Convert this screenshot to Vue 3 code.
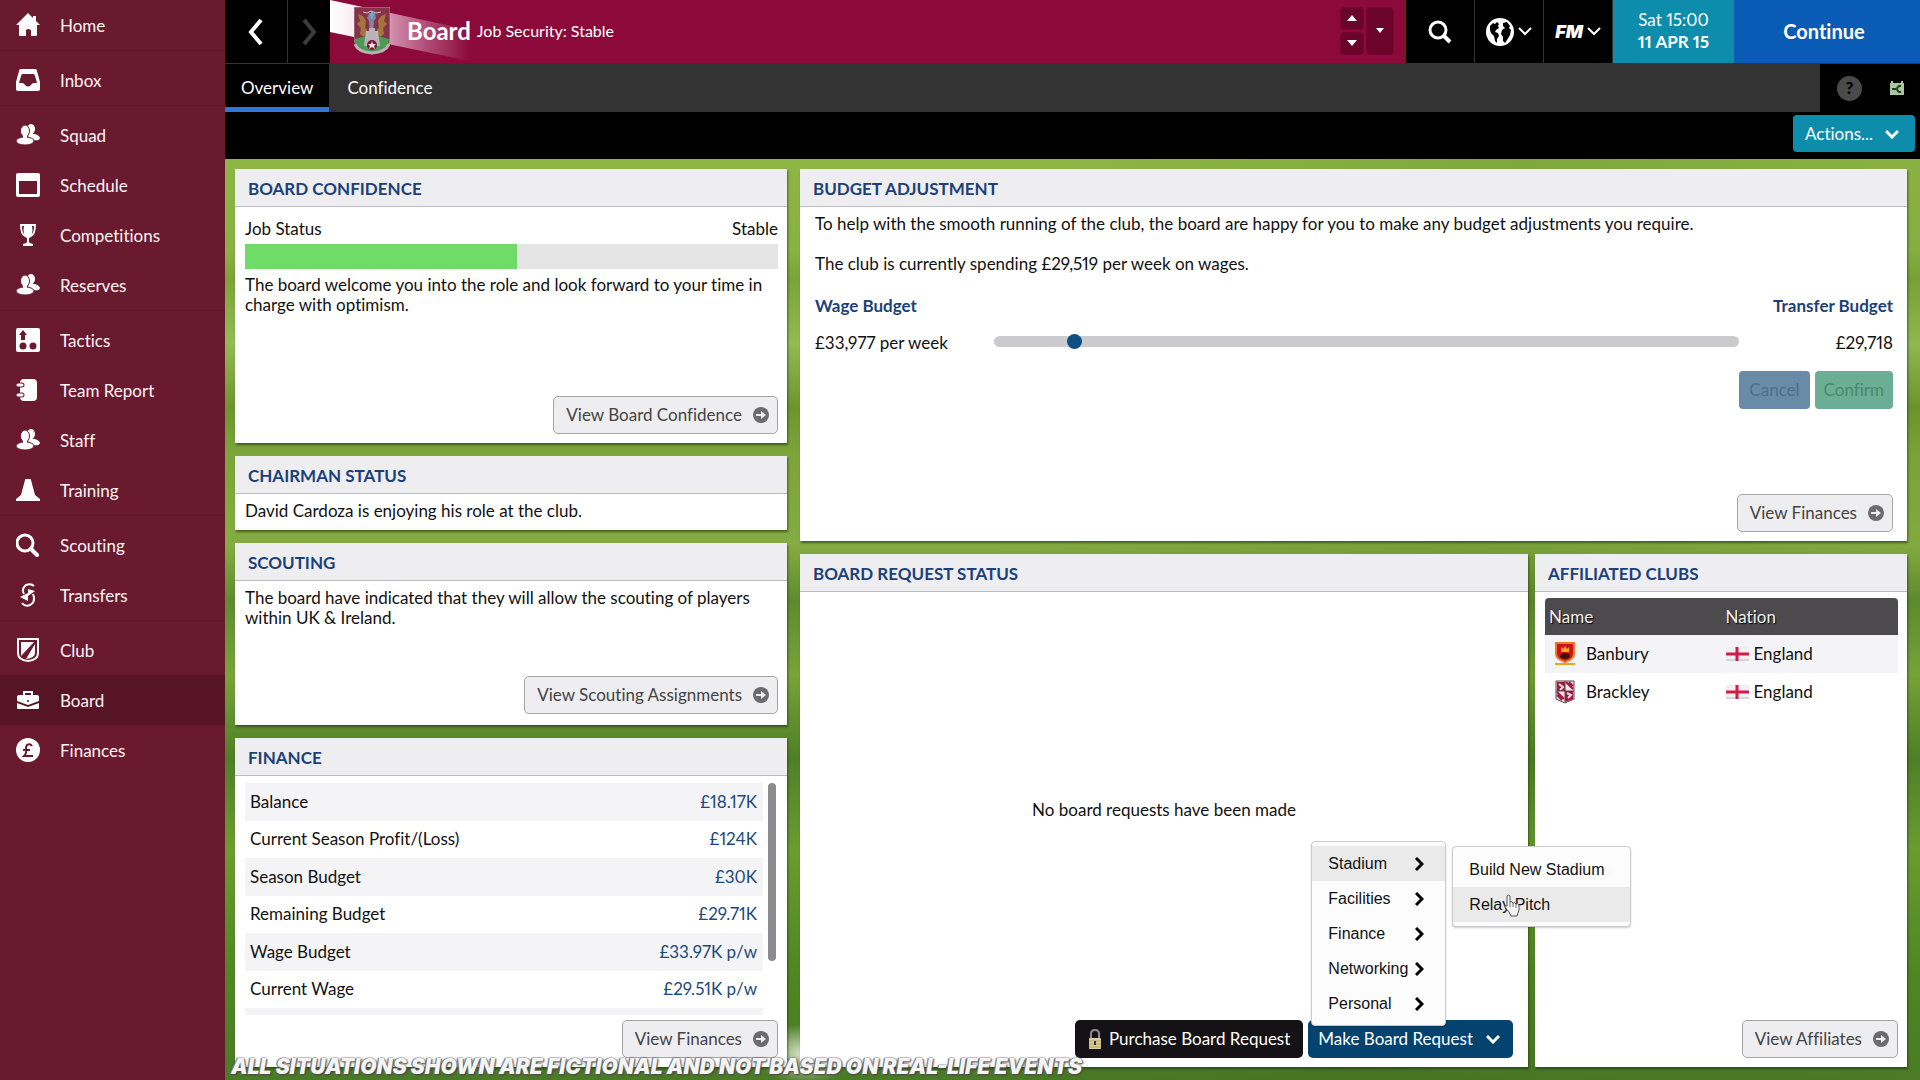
<template>
  <div class="app">
    <!-- sidebar -->
    <nav class="sidebar">
      <ul v-for="(group, index) in menuGroups" :key="index" class="nav-group">
        <li v-for="item in group" :key="item.name">
          <a
            href="#"
            :class="{ active: activeMenu === item.name }"
            @click.prevent="activeMenu = item.name"
          >
            <svg class="nav-icon" viewBox="0 0 24 24" v-html="icons[item.icon]"></svg>
            <span>{{ item.name }}</span>
          </a>
        </li>
      </ul>
    </nav>

    <div class="main">
      <!-- top bar -->
      <header class="topbar">
        <button class="back" aria-label="Back">
          <svg width="18" height="28" viewBox="0 0 18 28"><path d="M14 2 4 14l10 12" fill="none" stroke="#fff" stroke-width="4" /></svg>
        </button>
        <button class="forward" aria-label="Forward">
          <svg width="18" height="28" viewBox="0 0 18 28"><path d="M4 2l10 12L4 26" fill="none" stroke="#3c3c3c" stroke-width="4" /></svg>
        </button>
        <div class="title">
          <svg class="stripe" width="140" height="63" viewBox="0 0 140 63">
            <defs>
              <linearGradient id="stripeFade" x1="0" x2="1" y1="0" y2="0">
                <stop offset="0" stop-color="#fff" />
                <stop offset="0.3" stop-color="#f3dfe7" />
                <stop offset="0.45" stop-color="#d08aaa" />
                <stop offset="0.7" stop-color="#ae4a74" />
                <stop offset="1" stop-color="#8b0a39" />
              </linearGradient>
            </defs>
            <path d="M0 0 140 30V61L0 32z" fill="url(#stripeFade)" />
          </svg>
          <svg class="crest" width="36" height="48" viewBox="0 0 36 48">
            <path d="M0 0h36v32q0 9-18 15Q0 41 0 32z" fill="#84334a" stroke="#a58e93" />
            <path d="M1 32q8-3 17-3t17 3q0 9-17 14Q1 41 1 32z" fill="#4d9a55" />
            <path d="M4 7l5 2 3 5-1 6 3 5-4 5-4-3 1-6-4-4 3-3zM32 7l-5 2-3 5 1 6-3 5 4 5 4-3-1-6 4-4-3-3z" fill="#a3763c" />
            <path d="M9 5l4 1 4-2 5 2 5-1" stroke="#dfc4c0" fill="none" />
            <path d="M15 6h6l1 5-2 3-1 14h-3l-1-14-2-3z" fill="#8a7f9c" />
            <path d="M18 5v7M16 8h4" stroke="#4fb4d6" stroke-width="2" />
            <path d="M12 24h3v-3h6v3h3l2 15H10z" fill="#b9b2b7" />
            <circle cx="18" cy="38" r="5" fill="#7b1632" />
            <path d="M18 34l1 3h3l-2 2 1 3-3-2-3 2 1-3-2-2h3z" fill="#f0dfe4" />
            <path d="M1 37q3 8 17 9 14-1 17-9" stroke="#b8b1b2" stroke-width="3" fill="none" />
          </svg>
          <h1>Board</h1>
          <span class="subtitle">Job Security: Stable</span>
          <div class="stepper">
            <div class="step-pair">
              <button aria-label="Previous"><svg width="10" height="6"><path d="M5 0l5 6H0z" fill="#fff" /></svg></button>
              <button aria-label="Next"><svg width="10" height="6"><path d="M0 0h10L5 6z" fill="#fff" /></svg></button>
            </div>
            <button class="step-drop" aria-label="List"><svg width="8" height="5"><path d="M0 0h8L4 5z" fill="#fff" /></svg></button>
          </div>
        </div>
        <button class="tool search" aria-label="Search">
          <svg width="24" height="24" viewBox="0 0 24 24"><circle cx="10" cy="10" r="8" fill="none" stroke="#fff" stroke-width="3" /><path d="M16 16l6 6" stroke="#fff" stroke-width="4" /></svg>
        </button>
        <button class="tool" aria-label="World">
          <svg width="28" height="28" viewBox="0 0 28 28">
            <circle cx="14" cy="14" r="14" fill="#fff" />
            <path d="M4 8l3-3 2 1 2-2 2 2-1 2 1 2-3 2-1 2 3 1 1 3-2 3v4l-2-2-1-5-3-3-1-3zM17 5l4-1 3 4-1 2 2 2-1 5-3 5-2 3-2-2v-4l-2-3 1-4 3-2-2-2z" fill="#000" />
          </svg>
          <svg width="14" height="9" viewBox="0 0 14 9"><path d="M1 1l6 6 6-6" fill="none" stroke="#fff" stroke-width="2" /></svg>
        </button>
        <button class="tool" aria-label="FM menu">
          <span class="fm">FM</span>
          <svg width="14" height="9" viewBox="0 0 14 9"><path d="M1 1l6 6 6-6" fill="none" stroke="#fff" stroke-width="2" /></svg>
        </button>
        <div class="date">
          <span>Sat 15:00</span>
          <strong>11 APR 15</strong>
        </div>
        <button class="continue">Continue</button>
      </header>

      <!-- tabs -->
      <div class="tabs">
        <button
          v-for="tab in tabs"
          :key="tab"
          :class="{ active: activeTab === tab }"
          @click="activeTab = tab"
        >{{ tab }}</button>
        <div class="tabs-end">
          <button class="help" aria-label="Help">?</button>
          <svg width="14" height="14" viewBox="0 0 14 14"><path d="M1 0h2v2h8V0h2v2h1v12H0V2h1z" fill="#a9c79b" /><path d="M2 8h4M11 5H9q-4 3 0 6h2" stroke="#263a22" stroke-width="2" fill="none" /></svg>
        </div>
      </div>

      <div class="actions">
        <button>
          <span>Actions...</span>
          <svg width="14" height="10" viewBox="0 0 14 10"><path d="M1 2l6 6 6-6" fill="none" stroke="#fff" stroke-width="3" /></svg>
        </button>
      </div>

      <!-- panels -->
      <main class="content">
        <div class="col-left">
          <section class="panel confidence">
            <h2>Board Confidence</h2>
            <div class="body">
              <div class="row status">
                <span>Job Status</span>
                <span>Stable</span>
              </div>
              <div class="bar"><div :style="{ width: jobStatus + '%' }"></div></div>
              <p>The board welcome you into the role and look forward to your time in charge with optimism.</p>
              <button class="view">View Board Confidence<svg viewBox="0 0 16 16" v-html="icons.go"></svg></button>
            </div>
          </section>

          <section class="panel">
            <h2>Chairman Status</h2>
            <div class="body chairman">
              <p>David Cardoza is enjoying his role at the club.</p>
            </div>
          </section>

          <section class="panel scouting">
            <h2>Scouting</h2>
            <div class="body">
              <p>The board have indicated that they will allow the scouting of players within UK &amp; Ireland.</p>
              <button class="view">View Scouting Assignments<svg viewBox="0 0 16 16" v-html="icons.go"></svg></button>
            </div>
          </section>

          <section class="panel finance">
            <h2>Finance</h2>
            <div class="body">
              <div class="scroll">
                <div class="scroll-view">
                  <table>
                    <tbody>
                      <tr v-for="row in finances" :key="row.label">
                        <th scope="row">{{ row.label }}</th>
                        <td>{{ row.value }}</td>
                      </tr>
                    </tbody>
                  </table>
                </div>
                <div class="scrollbar"></div>
              </div>
              <button class="view">View Finances<svg viewBox="0 0 16 16" v-html="icons.go"></svg></button>
            </div>
          </section>
        </div>

        <div class="col-right">
          <section class="panel budget">
            <h2>Budget Adjustment</h2>
            <div class="body">
              <p>To help with the smooth running of the club, the board are happy for you to make any budget adjustments you require.</p>
              <p>The club is currently spending £29,519 per week on wages.</p>
              <div class="row budget-names">
                <label for="budget">Wage Budget</label>
                <label for="budget">Transfer Budget</label>
              </div>
              <div class="row budget-slider">
                <span class="wage">£33,977 per week</span>
                <input id="budget" v-model="budget" type="range" min="0" max="100">
                <span class="transfer">£29,718</span>
              </div>
              <div class="confirm-row">
                <button class="cancel" disabled>Cancel</button>
                <button class="confirm" disabled>Confirm</button>
              </div>
              <button class="view">View Finances<svg viewBox="0 0 16 16" v-html="icons.go"></svg></button>
            </div>
          </section>

          <div class="lower">
            <section class="panel requests">
              <h2>Board Request Status</h2>
              <div class="body">
                <p class="empty">No board requests have been made</p>
                <div class="request-buttons">
                  <button class="purchase">
                    <svg width="14" height="22" viewBox="0 0 14 22">
                      <path d="M3 11V6q0-4 4-4t4 4v5" fill="none" stroke="#8d8d8d" stroke-width="2" />
                      <rect x="1" y="10" width="12" height="11" rx="1" fill="#d9cf9c" />
                      <path d="M1 13h12M1 16h12M1 19h12" stroke="#b3a66c" />
                      <path d="M7 13v4" stroke="#3d3820" stroke-width="2" />
                    </svg>
                    Purchase Board Request
                  </button>
                  <div class="make-wrap">
                    <button class="make" @click="menuOpen = !menuOpen">
                      Make Board Request
                      <svg width="14" height="10" viewBox="0 0 14 10"><path d="M1 2l6 6 6-6" fill="none" stroke="#fff" stroke-width="3" /></svg>
                    </button>
                    <!-- drop-up menu, sits over the button -->
                    <ul v-if="menuOpen" class="popup">
                      <li
                        v-for="item in requestMenu"
                        :key="item"
                        :class="{ active: activeRequest === item }"
                        @mouseenter="activeRequest = item"
                      >
                        <button>
                          {{ item }}
                          <svg width="9" height="14" viewBox="0 0 9 14"><path d="M1 1l6 6-6 6" fill="none" stroke="#000" stroke-width="3" /></svg>
                        </button>
                        <ul v-if="item === 'Stadium' && activeRequest === item" class="popup submenu">
                          <li><button>Build New Stadium</button></li>
                          <li class="active">
                            <button>Relay Pitch</button>
                            <svg class="cursor" width="18" height="24" viewBox="0 0 18 24"><path d="M3 2q2-2 3 0v6q2-1 3 1 2-1 3 1 2-1 3 1v5l-2 6H7l-2-4-4-5q0-2 2-1z" fill="#f4f4f4" stroke="#555" /><path d="M6 8v5M9 9v4M12 10v4" stroke="#777" /></svg>
                          </li>
                        </ul>
                      </li>
                    </ul>
                  </div>
                </div>
              </div>
            </section>

            <section class="panel affiliated">
              <h2>Affiliated Clubs</h2>
              <div class="body">
                <table>
                  <thead>
                    <tr><th>Name</th><th>Nation</th></tr>
                  </thead>
                  <tbody>
                    <tr v-for="club in clubs" :key="club.name">
                      <td>
                        <div class="cell club">
                          <svg width="20" height="24" viewBox="0 0 20 24" v-html="icons[club.icon]"></svg>
                          {{ club.name }}
                        </div>
                      </td>
                      <td>
                        <div class="cell">
                          <svg width="23" height="14" viewBox="0 0 23 14"><path d="M0 0h23v14H0z" fill="#f1eff2" /><path d="M0 13h23" stroke="#bdbac0" /><path d="M0 7h23M11 0v14" stroke="#cf1b4c" stroke-width="3" /></svg>
                          {{ club.nation }}
                        </div>
                      </td>
                    </tr>
                  </tbody>
                </table>
                <button class="view">View Affiliates<svg viewBox="0 0 16 16" v-html="icons.go"></svg></button>
              </div>
            </section>
          </div>
        </div>
      </main>
    </div>

    <div class="notice">ALL SITUATIONS SHOWN ARE FICTIONAL AND NOT BASED ON REAL-LIFE EVENTS</div>
  </div>
</template>

<script setup>
import { ref } from "vue";

const activeMenu = ref("Board");
const tabs = ["Overview", "Confidence"];
const activeTab = ref("Overview");
const jobStatus = ref(51);
const budget = ref(10);
const menuOpen = ref(true);
const activeRequest = ref("Stadium");

// sidebar groups, a thin separator between each
const menuGroups = [
  [{ name: "Home", icon: "home" }],
  [{ name: "Inbox", icon: "inbox" }],
  [
    { name: "Squad", icon: "people" },
    { name: "Schedule", icon: "calendar" },
    { name: "Competitions", icon: "cup" },
    { name: "Reserves", icon: "people" },
  ],
  [
    { name: "Tactics", icon: "tactics" },
    { name: "Team Report", icon: "report" },
    { name: "Staff", icon: "people" },
    { name: "Training", icon: "cone" },
  ],
  [
    { name: "Scouting", icon: "search" },
    { name: "Transfers", icon: "transfers" },
  ],
  [
    { name: "Club", icon: "shield" },
    { name: "Board", icon: "briefcase" },
    { name: "Finances", icon: "pound" },
  ],
];

const finances = [
  { label: "Balance", value: "£18.17K" },
  { label: "Current Season Profit/(Loss)", value: "£124K" },
  { label: "Season Budget", value: "£30K" },
  { label: "Remaining Budget", value: "£29.71K" },
  { label: "Wage Budget", value: "£33.97K p/w" },
  { label: "Current Wage", value: "£29.51K p/w" },
  { label: "", value: "" },
];

const requestMenu = ["Stadium", "Facilities", "Finance", "Networking", "Personal"];

const clubs = [
  { name: "Banbury", icon: "banbury", nation: "England" },
  { name: "Brackley", icon: "brackley", nation: "England" },
];

const icons = {
  home: '<path d="M12 0l5 5V3h3v5l4 4h-3v10q0 1-1 1h-5v-6q-3-2-5 0v6H4q-1 0-1-1V12H0z" fill="#fff"/>',
  inbox: '<path fill-rule="evenodd" d="M5 1h14q2 0 2 2l3 11v7q0 2-2 2H2q-2 0-2-2v-7L3 3q0-2 2-2zM7 6Q5 6 5 8l-2 7h3q2 0 3 2 3 3 6 0 1-2 3-2h3l-2-7q0-2-2-2z" fill="#fff"/>',
  people:
    '<g fill="#fff"><ellipse cx="15" cy="6" rx="4" ry="5"/><ellipse cx="18" cy="14" rx="6" ry="3" transform="rotate(15 18 14)"/><path d="M13 9h4v5h-4z"/></g><g fill="#fff" stroke="#6a1a2e"><ellipse cx="9" cy="8" rx="4.5" ry="6"/><ellipse cx="9" cy="18" rx="9" ry="4"/></g><path d="M7 12h4v4H7z" fill="#fff"/>',
  calendar: '<path fill-rule="evenodd" d="M2 0h20q2 0 2 2v20q0 2-2 2H2q-2 0-2-2V2q0-2 2-2zM3 8v13h18V8z" fill="#fff"/>',
  cup: '<path fill-rule="evenodd" d="M4 1h16q0 11-5 13l-2 1v4q0 1 4 2v2H7v-2q4-1 4-2v-4l-2-1Q4 12 4 1zM6 3q0 6 2 8Q7 7 8 3zM18 3h-2q1 4 0 8 2-2 2-8z" fill="#fff"/>',
  tactics:
    '<rect width="24" height="24" rx="2" fill="#fff"/><path d="M7 2l4 5H9v5H5V7H3z" fill="#6a1a2e"/><circle cx="7" cy="18" r="3.5" fill="#6a1a2e"/><circle cx="17" cy="18" r="3.5" fill="#6a1a2e"/>',
  report:
    '<rect x="4" y="1" width="17" height="22" rx="4" fill="#fff"/><path d="M1 7h5M1 17h5" stroke="#6a1a2e" stroke-width="5" stroke-linecap="round"/><path d="M2 7h4M2 17h4" stroke="#fff" stroke-width="3" stroke-linecap="round"/>',
  cone: '<path d="M10 1h4q1 0 1 1l4 15 5 4v2H0v-2l5-4L9 2q0-1 1-1z" fill="#fff"/>',
  search: '<circle cx="9" cy="10" r="8" fill="none" stroke="#fff" stroke-width="3"/><path d="M15 16l6 6" stroke="#fff" stroke-width="4" stroke-linecap="round"/>',
  transfers:
    '<path d="M18 3q-3-3-8-1-5 4-2 9M6 20q3 4 8 2 6-3 3-11" fill="none" stroke="#fff" stroke-width="2"/><path d="M4 14l8-4v8zM19 8l-7 5V6z" fill="#fff"/>',
  shield:
    '<path d="M2 1h20v14q0 7-10 8Q2 22 2 15z" fill="none" stroke="#fff" stroke-width="2"/><path d="M5 4h13L5 18zM19 6v9q0 5-9 6z" fill="#fff"/>',
  briefcase:
    '<path d="M8 7V4h8v3" fill="none" stroke="#fff" stroke-width="2"/><path d="M3 7h18q2 0 2 2v4l-11 4L1 13V9q0-2 2-2z" fill="#fff"/><path d="M1 15l11 4 11-4v5q0 1-1 1H2q-1 0-1-1z" fill="#fff"/><circle cx="12" cy="13" r="1" fill="#561424"/>',
  pound:
    '<circle cx="12" cy="12" r="12" fill="#fff"/><path d="M16 8q-2-3-5-1-1 1-1 4 1 4-2 7h9M7 12h7" fill="none" stroke="#6a1a2e" stroke-width="2"/>',
  go: '<circle cx="8" cy="8" r="8" fill="#6c6b6d"/><path d="M3 7h5V4l5 4-5 4V9H3z" fill="#eeedf0"/>',
  banbury:
    '<path d="M1 1h18v11q0 5-9 8-9-3-9-8z" fill="#c8161d" stroke="#ee7b24" stroke-width="2"/><path d="M6 5l2 2 2-3 2 3 2-2v5H6z" fill="#f6a623"/><ellipse cx="10" cy="14" rx="5" ry="3" fill="#4a0c10"/><path d="M0 21h20v2H0z" fill="#f0a01e"/>',
  brackley:
    '<path d="M1 1h18v18l-9 4-9-4z" fill="#efe9ec" stroke="#5b4048"/><path d="M2 2h8v9H2zM10 11h8v8l-8 3z" fill="#a3163f"/><path d="M4 4l4 3-3 3M12 13l4 2-3 3" stroke="#f0dde3" stroke-width="2" fill="none"/><path d="M11 2l7 7M14 2l4 4M2 12l7 7M2 15l5 5" stroke="#a3163f" stroke-width="2"/><path d="M10 1v21M1 11h18" stroke="#5b4048"/>',
};
</script>

<style>
body {
  margin: 0;
}
</style>

<style scoped>
* {
  box-sizing: border-box;
}
.app {
  position: relative;
  display: flex;
  min-height: 100vh;
  font-family: Lato, "Liberation Sans", sans-serif;
  font-size: 17px;
  line-height: 20px;
  font-variant-ligatures: no-common-ligatures;
  font-variant-numeric: proportional-nums;
  color: #111;
}
button {
  font: inherit;
  font-variant: inherit;
  color: inherit;
  border: none;
  background: none;
  padding: 0;
  cursor: pointer;
}
ul {
  list-style: none;
  margin: 0;
  padding: 0;
}
p,
h1,
h2 {
  margin: 0;
}
table {
  width: 100%;
  border-collapse: collapse;
}

/* sidebar */
.sidebar {
  flex: 0 0 225px;
  background: #6a1a2e;
}
.nav-group + .nav-group {
  border-top: 1px solid #631629;
  padding-top: 4px;
}
.sidebar a {
  display: flex;
  align-items: center;
  gap: 20px;
  height: 50px;
  padding-left: 16px;
  color: #fff3f6;
  text-decoration: none;
}
.sidebar span {
  padding-top: 2px;
}
.sidebar a.active {
  background: #561424;
}
.nav-icon {
  width: 24px;
  height: 24px;
}

/* top bar */
.main {
  flex: 1;
  min-width: 0;
  display: flex;
  flex-direction: column;
  background: #000;
}
.topbar {
  display: flex;
  height: 63px;
  color: #fff;
}
.topbar button {
  display: flex;
  align-items: center;
  justify-content: center;
}
.topbar .back {
  width: 63px;
  border-right: 1px solid #333;
}
.topbar .forward {
  width: 42px;
}
.title {
  position: relative;
  flex: 1;
  display: flex;
  align-items: center;
  padding: 0 12px 2px 24px;
  background: #8b0a39;
}
.stripe {
  position: absolute;
  left: 0;
  top: 0;
}
.crest {
  position: relative;
}
.title h1 {
  position: relative;
  margin-left: 17px;
  font-size: 24px;
  line-height: 30px;
}
.subtitle {
  margin-left: 6px;
  font-size: 16px;
}
.stepper {
  display: flex;
  gap: 2px;
  height: 48px;
  margin-left: auto;
}
.stepper button {
  background: #6a0428;
  border: 1px solid #78042f;
  border-radius: 4px;
}
.step-pair {
  display: flex;
  flex-direction: column;
  gap: 2px;
}
.step-pair button {
  flex: 1;
  width: 24px;
}
.stepper .step-drop {
  width: 28px;
}
.topbar .tool {
  width: 69px;
  gap: 4px;
  border-right: 1px solid #333;
}
.topbar .tool:last-of-type {
  border-right: none;
}
.fm {
  font-family: Inter, sans-serif;
  font-size: 18px;
  font-weight: 900;
  font-style: italic;
}
.date {
  width: 121px;
  display: flex;
  flex-direction: column;
  justify-content: center;
  padding-bottom: 2px;
  text-align: center;
  line-height: 22px;
  background: #0d8cab;
}
.topbar .continue {
  width: 186px;
  padding: 0 6px 2px 0;
  font-size: 20px;
  font-weight: bold;
  background: #0a5bb5;
}

/* tabs */
.tabs {
  display: flex;
  height: 49px;
  border-top: 1px solid #333;
  background: #333;
  color: #fff;
}
.tabs > button {
  padding: 5px 18px 0;
  border-bottom: 5px solid transparent;
}
.tabs > button.active {
  padding: 5px 16px 0;
  background: #000;
  border-color: #2f78d6;
}
.tabs-end {
  display: flex;
  align-items: center;
  justify-content: space-between;
  width: 100px;
  margin-left: auto;
  padding: 0 16px 0 17px;
  background: #000;
}
.help {
  width: 25px;
  height: 25px;
  border-radius: 50%;
  background: #4a4a4a;
  color: #000;
  font-weight: 900;
}
.actions {
  display: flex;
  justify-content: flex-end;
  padding: 3px 5px 7px 0;
}
.actions button {
  display: flex;
  align-items: center;
  justify-content: space-between;
  width: 122px;
  height: 37px;
  padding: 0 16px 0 12px;
  border-radius: 4px;
  background: #0d8cab;
  color: #fff;
}

/* panels over the grass */
.content {
  flex: 1;
  display: grid;
  grid-template-columns: 552fr 1107fr;
  gap: 13px;
  padding: 10px 13px 13px 10px;
  background:
    radial-gradient(ellipse 50px 30px at 580px 895px, #dfe6d2 0%, rgba(223, 230, 210, 0) 100%),
    linear-gradient(100deg, rgba(40, 90, 10, 0) 0 45%, rgba(40, 90, 10, 0.15) 70%, rgba(40, 90, 10, 0) 100%),
    linear-gradient(#8db645 0%, #89b143 10%, #7ba339 13%, #93bb55 20%, #6d952f 27%, #7ba43a 32%, #84ac42 42%, #5f8b30 48%, #78a33a 56%, #4f7f26 65%, #6c9c31 75%, #4f8722 88%, #4a7a26 100%);
}
.col-left,
.col-right {
  display: flex;
  flex-direction: column;
  gap: 13px;
  min-width: 0;
}
.panel {
  display: flex;
  flex-direction: column;
  background: #fff;
  box-shadow: 1px 2px 2px rgba(30, 50, 10, 0.6);
}
.panel h2 {
  padding: 10px 13px 7px;
  background: #eeeef0;
  border-bottom: 1px solid #bcbcc0;
  color: #1c4079;
  font-size: 17px;
  line-height: 20px;
  text-transform: uppercase;
}
.body {
  flex: 1;
  display: flex;
  flex-direction: column;
  padding: 7px 9px 9px 10px;
}
.row {
  display: flex;
  justify-content: space-between;
}
.confidence {
  flex: 274 0 0;
}
.scouting {
  flex: 181 0 0;
}
.scouting .body {
  padding-bottom: 11px;
}
.finance {
  flex: 329 0 0;
}
.chairman {
  padding-bottom: 9px;
}
.status {
  padding: 5px 0;
}
.bar {
  height: 25px;
  margin-bottom: 6px;
  background: #e4e4e4;
}
.bar div {
  height: 100%;
  background: #6fdc6a;
}
.view {
  display: flex;
  align-items: center;
  gap: 11px;
  align-self: flex-end;
  height: 38px;
  margin-top: auto;
  padding: 0 8px 0 12px;
  border: 1px solid #a5a5a8;
  border-radius: 5px;
  background: #eeedf0;
  color: #444;
}
.view svg {
  width: 16px;
  height: 16px;
}

/* finance table */
.scroll {
  display: flex;
  justify-content: space-between;
}
.scroll-view {
  flex: 1;
  height: 232px;
  margin-right: 5px;
  overflow: hidden;
}
.scrollbar {
  width: 8px;
  height: 178px;
  margin-right: 2px;
  border-radius: 4px;
  background: #8c8c8e;
}
.finance tr {
  height: 37px;
}
.finance tr:nth-child(odd) {
  height: 38px;
  background: #f4f3f5;
}
.finance th {
  padding: 0 5px;
  font-weight: normal;
  text-align: left;
}
.finance td {
  padding: 0 6px;
  text-align: right;
  color: #1c4a7c;
}

/* budget */
.budget {
  flex: 372 0 0;
}
.budget .body {
  padding: 7px 14px 9px 15px;
}
.budget p {
  margin-bottom: 20px;
}
.budget-names {
  margin: 2px 0 17px;
  color: #1c4079;
  font-weight: bold;
}
.budget-slider {
  align-items: flex-start;
}
.wage,
.transfer {
  flex: 0 0 179px;
}
.transfer {
  flex-basis: 154px;
  text-align: right;
}
.budget-slider input {
  flex: 1;
  min-width: 0;
  height: 16px;
  margin: 0;
  background: none;
  appearance: none;
}
.budget-slider input::-webkit-slider-runnable-track {
  height: 11px;
  border-radius: 6px;
  background: #cbcacc;
}
.budget-slider input::-webkit-slider-thumb {
  appearance: none;
  width: 15px;
  height: 15px;
  margin-top: -2px;
  border-radius: 50%;
  background: #0d4f80;
}
.confirm-row {
  display: flex;
  justify-content: flex-end;
  gap: 5px;
  margin-top: 18px;
}
.confirm-row button {
  height: 38px;
  padding: 0 10px;
  border-radius: 4px;
  background: #6a8ba8;
  color: #4c6f8f;
}
.confirm-row .confirm {
  padding: 0 9px;
  background: #6bae95;
  color: #47886f;
}

/* requests */
.lower {
  flex: 513 0 0;
  display: grid;
  grid-template-columns: 728fr 372fr;
  gap: 7px;
}
.requests .body {
  padding: 7px 15px 9px;
}
.empty {
  flex: 1;
  display: flex;
  align-items: center;
  justify-content: center;
}
.request-buttons {
  display: flex;
  justify-content: flex-end;
  gap: 5px;
}
.purchase,
.make {
  display: flex;
  align-items: center;
  height: 38px;
  border-radius: 5px;
  color: #fff;
}
.purchase {
  gap: 7px;
  padding: 0 13px;
  background: #141214;
}
.make-wrap {
  position: relative;
}
.make {
  gap: 13px;
  padding: 0 13px 0 10px;
  background: #04426f;
}
.popup {
  position: absolute;
  left: 3px;
  bottom: 32px;
  width: 135px;
  padding: 4px 0;
  border: 1px solid #ccc;
  border-radius: 4px;
  background: #fcfcfd;
  box-shadow: 0 1px 2px rgba(0, 0, 0, 0.2);
  font-family: "Liberation Sans", sans-serif;
  font-size: 16px;
  z-index: 2;
}
.popup li {
  position: relative;
}
.popup li.active {
  background: #ebeaeb;
}
.popup button {
  display: flex;
  align-items: center;
  justify-content: space-between;
  width: 100%;
  height: 35px;
  padding: 0 21px 0 16px;
}
.submenu {
  left: 140px;
  top: 0;
  bottom: auto;
  width: 179px;
  padding: 5px 0 4px;
}
.cursor {
  position: absolute;
  left: 51px;
  top: 7px;
}

/* affiliated clubs */
.affiliated .body {
  padding: 6px 9px 9px 10px;
}
.affiliated thead th {
  height: 37px;
  padding: 0 4px;
  background: #4c4a4d;
  color: #f2f2f2;
  font-weight: normal;
  text-align: left;
  text-shadow: 1px 1px 1px #000;
}
.affiliated th:first-child {
  width: 50%;
  border-radius: 4px 0 0 0;
}
.affiliated th:last-child {
  border-radius: 0 4px 0 0;
}
.affiliated tbody tr {
  height: 38px;
}
.affiliated tbody tr:first-child {
  background: #f4f3f5;
}
.affiliated td {
  padding: 0 4px;
}
.cell {
  display: flex;
  align-items: center;
  gap: 5px;
}
.cell.club {
  gap: 11px;
  padding-left: 6px;
}

.notice {
  position: absolute;
  left: 231px;
  bottom: 1px;
  color: #f4f4f4;
  font-family: Inter, sans-serif;
  font-size: 21px;
  font-weight: 900;
  font-style: italic;
  line-height: 24px;
  text-shadow: 0 0 2px #555, 1px 1px 2px #444, -1px 0 1px #777;
  pointer-events: none;
}
</style>
